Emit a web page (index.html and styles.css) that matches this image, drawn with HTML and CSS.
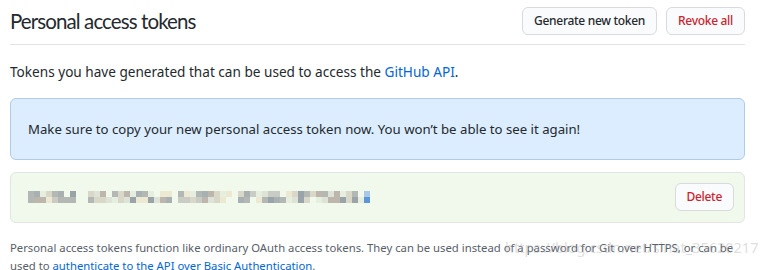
FILE: index.html
```html
<!DOCTYPE html>
<html lang="en">
<head>
    <meta charset="UTF-8">
    <meta name="viewport" content="width=device-width, initial-scale=1.0">
    <title>Personal access tokens</title>
    <link rel="stylesheet" href="styles.css">
</head>
<body>
    <div class="container">
        <div class="subhead">
            <h2 class="subhead-heading">Personal access tokens</h2>
            <div class="subhead-actions">
                <a href="#" class="btn">Generate new token</a>
                <a href="#" class="btn btn-danger">Revoke all</a>
            </div>
        </div>
        <p class="intro">Tokens you have generated that can be used to access the <a href="#">GitHub API</a>.</p>

        <div class="flash">
            Make sure to copy your new personal access token now. You won’t be able to see it again!
        </div>

        <div class="token-row">
            <div class="token-value" id="token"></div>
            <a href="#" class="btn btn-danger">Delete</a>
        </div>

        <p class="note">Personal access tokens function like ordinary OAuth access tokens. They can be used instead of a password for Git over HTTPS, or can be used to <a href="#">authenticate to the API over Basic Authentication</a>.</p>
    </div>
    <div class="watermark">https://blog.csdn.net/sinat_35620217</div>
    <script src="script.js"></script>
</body>
</html>
```

FILE: styles.css
```css
body {
    font-family: "Noto Sans", "Open Sans", sans-serif;
    font-size: 14px;
    line-height: 1.5;
    color: #24292e;
    background-color: #fff;
    margin: 0;
    padding: 0;
}

a {
    color: #0366d6;
    text-decoration: none;
}

.container {
    width: 735px;
    margin-left: 10px;
}

.subhead {
    display: flex;
    align-items: center;
    padding: 3px 0 5px;
    border-bottom: 1px solid #e1e4e8;
}

.subhead-heading {
    flex: 1;
    margin: 0;
    font-family: Lato, "Noto Sans", sans-serif;
    font-size: 20.5px;
    font-weight: 400;
    letter-spacing: -0.9px;
    line-height: 36px;
    color: #24292e;
}

.subhead-actions {
    display: flex;
    gap: 9px;
}

.btn {
    display: inline-block;
    padding: 3px 11px;
    font-size: 12px;
    font-weight: 500;
    letter-spacing: -0.3px;
    line-height: 20px;
    color: #24292e;
    background-color: #fafbfc;
    border: 1px solid #d8dadd;
    border-radius: 6px;
}

.btn-danger {
    color: #cb2431;
}

.intro {
    margin: 17px 0 16px;
    font-size: 13.6px;
}

.flash {
    padding: 20px 17px;
    font-size: 13.2px;
    line-height: 20px;
    background-color: #dbedff;
    border: 1px solid #afcbea;
    border-radius: 6px;
}

.token-row {
    display: flex;
    align-items: center;
    justify-content: space-between;
    margin-top: 12px;
    padding: 10px 10px 11px 17px;
    background-color: #f1f8ec;
    border: 1px solid #e1e4e8;
    border-radius: 6px;
}

.token-value {
    display: grid;
    grid-template-columns: repeat(57, 6px);
    grid-auto-rows: 6px;
}

.note {
    margin: 16px 0 0;
    font-size: 11.3px;
    line-height: 18px;
    color: #586069;
}

.watermark {
    position: absolute;
    left: 505px;
    top: 237px;
    font-size: 14.5px;
    color: rgba(170, 170, 170, 0.4);
    pointer-events: none;
}
```

FILE: script.js
```js
// pixelated (blurred) token, two rows of squares
const tokenEl = document.getElementById('token');
const shades = ['#f1f8ec', '#e6eee0', '#d9d8c8', '#c8ccc4', '#b4b8b4', '#a9b0b2', '#bcb6ad', '#dde3d6', '#9aa3a8', '#ece8d2'];

let seed = 7;
function rand() {
    seed = (seed * 9301 + 49297) % 233280;
    return seed / 233280;
}

for (let row = 0; row < 2; row++) {
    for (let col = 0; col < 57; col++) {
        const cell = document.createElement('span');
        let color = shades[Math.floor(rand() * shades.length)];
        if (col === 8 || col === 9 || col === 24 || col === 34) color = '#f1f8ec';
        if (col === 56) color = row === 0 ? '#a8c8e6' : '#5d96d8';
        cell.style.background = color;
        tokenEl.appendChild(cell);
    }
}
```
